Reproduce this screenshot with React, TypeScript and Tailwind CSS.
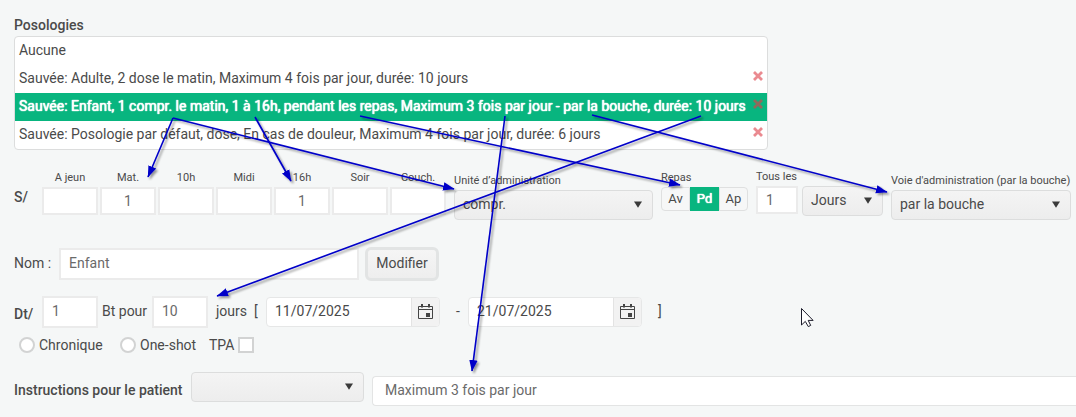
import React, { useId, useState } from "react";

const POSOLOGIES = [
  { text: "Aucune", removable: false },
  { text: "Sauvée: Adulte, 2 dose le matin, Maximum 4 fois par jour, durée: 10 jours", removable: true },
  {
    text: "Sauvée: Enfant, 1 compr. le matin, 1 à 16h, pendant les repas, Maximum 3 fois par jour - par la bouche, durée: 10 jours",
    removable: true,
  },
  {
    text: "Sauvée: Posologie par défaut, dose, En cas de douleur, Maximum 4 fois par jour, durée: 6 jours",
    removable: true,
  },
];

const MOMENTS = [
  { label: "A jeun", value: "" },
  { label: "Mat.", value: "1" },
  { label: "10h", value: "" },
  { label: "Midi", value: "" },
  { label: "16h", value: "1" },
  { label: "Soir", value: "" },
  { label: "Couch.", value: "" },
];

const LINKS = [
  [173, 118, 148, 177],
  [173, 118, 454, 189],
  [255, 117, 291, 181],
  [360, 116, 680, 185],
  [505, 116, 472, 371],
  [592, 115, 887, 192],
  [701, 116, 217, 296],
];

const FIELD =
  "min-w-0 border-2 border-[#ebebeb] bg-white text-sm text-[#6a6a6a] outline-none";
const CAPTION = "block h-5 text-[11px] leading-[22px] whitespace-nowrap";

function Select({ id, label, options, className }: { id: string; label?: string; options: string[]; className: string }) {
  return (
    <div className={`relative h-[30px] ${className}`}>
      <select
        id={id}
        aria-label={label}
        className="h-full w-full appearance-none rounded border border-[#dcdddd] bg-linear-to-b from-[#f4f4f4] to-[#ededed] pr-6 pb-0.5 pl-2 text-sm text-[#4a4a4a] outline-none"
      >
        {options.map((o) => (
          <option key={o}>{o}</option>
        ))}
      </select>
      <svg className="pointer-events-none absolute top-[11px] right-[11px] h-[7px] w-2" viewBox="0 0 8 7" fill="#3a3a3a">
        <path d="M0 0.5h8L4 6.8z" />
      </svg>
    </div>
  );
}

function DateField({ label, value }: { label: string; value: string }) {
  return (
    <div className="flex h-[30px] w-[174px] overflow-hidden rounded border border-[#e6e7e7] bg-white">
      <input
        aria-label={label}
        defaultValue={value}
        className="min-w-0 flex-1 pb-0.5 pl-2 text-sm text-[#4a4a4a] outline-none"
      />
      <button
        type="button"
        aria-label={`Calendrier, ${label}`}
        className="flex w-7 items-center justify-center border-l border-[#e3e3e3] bg-[#f2f2f2]"
      >
        <svg width="15" height="16" viewBox="0 0 15 16" fill="none" stroke="#444">
          <path d="M0.5 2.5h14v12h-14z M0.5 5.5h14" />
          <path d="M4 0v3.5 M11 0v3.5" strokeWidth="2" />
          <path d="M8 9h4v4h-4z" fill="#444" stroke="none" />
        </svg>
      </button>
    </div>
  );
}

function PosologyList() {
  const [selected, setSelected] = useState(2);
  return (
    <ul
      role="listbox"
      aria-label="Posologies"
      className="w-[754px] max-w-full overflow-hidden rounded border border-[#dcdddd] bg-white"
    >
      {POSOLOGIES.map((p, i) => (
        <li
          key={p.text}
          role="option"
          aria-selected={i === selected}
          onClick={() => setSelected(i)}
          className={`flex h-7 items-start justify-between pr-1 pl-1 leading-[26px] whitespace-nowrap ${
            i === selected ? "bg-[#08b57f] text-white [text-shadow:0_0_1px_#fff,0_0_1px_#fff]" : ""
          }`}
        >
          <span>{p.text}</span>
          {p.removable && (
            <button type="button" aria-label="Supprimer" className="pt-1.5">
              <svg width="10" height="10" viewBox="0 0 10 10" className={i === selected ? "stroke-[#8f6a5c]" : "stroke-[#ea8a90]"}>
                <path d="M1 1l8 8M9 1l-8 8" strokeWidth="2.8" />
              </svg>
            </button>
          )}
        </li>
      ))}
    </ul>
  );
}

function Annotations() {
  return (
    <svg className="pointer-events-none absolute top-0 left-0" width="1076" height="417" aria-hidden="true">
      <defs>
        <marker id="head" markerUnits="userSpaceOnUse" markerWidth="12" markerHeight="10" refX="11" refY="5" orient="auto">
          <path d="M0 0.8L11.5 5L0 9.2z" fill="#0000c8" />
        </marker>
        <filter id="shade" filterUnits="userSpaceOnUse" x="0" y="0" width="1076" height="417">
          <feDropShadow dx="2" dy="2" stdDeviation="1.3" floodColor="#000" floodOpacity="0.4" />
        </filter>
      </defs>
      <g filter="url(#shade)" stroke="#0000c8" strokeWidth="1.6">
        {LINKS.map(([x1, y1, x2, y2]) => (
          <line key={`${x1}-${x2}`} x1={x1} y1={y1} x2={x2} y2={y2} markerEnd="url(#head)" />
        ))}
      </g>
      <path
        d="M801.5 308.5v16.5l3.8-3.6 3 5.2 2.4-1.2-2.5-5h4.9z"
        fill="#fff"
        stroke="#1c1c2b"
      />
    </svg>
  );
}

export default function App() {
  const id = useId();
  const [meal, setMeal] = useState("Pd");
  return (
    <main className="relative min-h-screen overflow-hidden bg-[#f5f7f7] pt-[15px] pl-3.5 font-[Roboto,sans-serif] text-sm text-[#4a4a4a]">
      <h1 className="h-[21px] leading-5 font-medium">Posologies</h1>
      <PosologyList />

      <div className="mt-4 flex items-start">
        <span className="w-7 shrink-0 pt-[21px] leading-5 font-medium">S/</span>
        <div className="flex gap-0.5 pt-px">
          {MOMENTS.map((m) => (
            <label key={m.label} className="w-14 text-center">
              <span className={CAPTION}>{m.label}</span>
              <input defaultValue={m.value} className={`${FIELD} block h-7 w-full text-center`} />
            </label>
          ))}
        </div>
        <div className="ml-2 pt-1">
          <label htmlFor={`${id}-unit`} className={CAPTION}>
            Unité d’administration
          </label>
          <Select id={`${id}-unit`} options={["compr.", "dose"]} className="w-[199px]" />
        </div>
        <div className="ml-2 pt-px">
          <span className={CAPTION}>Repas</span>
          <div className="flex">
            {["Av", "Pd", "Ap"].map((v) => (
              <button
                key={v}
                type="button"
                aria-pressed={v === meal}
                onClick={() => setMeal(v)}
                className={`h-6 w-[29px] border text-[13px] leading-5 first:rounded-l-sm last:rounded-r-sm ${
                  v === meal
                    ? "border-[#08b57f] bg-[#08b57f] text-white [text-shadow:0_0_1px_#fff,0_0_1px_#fff]"
                    : "border-[#dfe0e0] bg-[#f6f7f7]"
                }`}
              >
                {v}
              </button>
            ))}
          </div>
        </div>
        <div className="ml-2">
          <label htmlFor={`${id}-every`} className={CAPTION}>
            Tous les
          </label>
          <div className="flex gap-1">
            <input id={`${id}-every`} defaultValue="1" className={`${FIELD} h-7 w-[42px] pl-2`} />
            <Select id={`${id}-period`} label="Période" options={["Jours", "Semaines", "Mois"]} className="w-[81px]" />
          </div>
        </div>
        <div className="ml-2 pt-1">
          <label htmlFor={`${id}-route`} className={CAPTION}>
            Voie d'administration (par la bouche)
          </label>
          <Select id={`${id}-route`} options={["par la bouche"]} className="w-[180px]" />
        </div>
      </div>

      <div className="mt-[27px] flex h-[34px] items-center">
        <label htmlFor={`${id}-name`} className="w-[45px] pb-0.5 whitespace-nowrap">
          Nom :
        </label>
        <input id={`${id}-name`} defaultValue="Enfant" className={`${FIELD} h-8 w-[300px] pb-0.5 pl-2`} />
        <button
          type="button"
          className="ml-1.5 h-[34px] w-[74px] rounded-md border-[3px] border-[#e2e4e4] bg-linear-to-b from-[#f5f5f5] to-[#eeeeee] pb-0.5"
        >
          Modifier
        </button>
      </div>

      <div className="mt-[15px] flex h-8 items-center">
        <label htmlFor={`${id}-dt`} className="w-7 pt-1 font-medium">
          Dt/
        </label>
        <input id={`${id}-dt`} defaultValue="1" className={`${FIELD} h-8 w-14 pb-0.5 pl-2`} />
        <label htmlFor={`${id}-days`} className="ml-1 w-[50px] pb-0.5 whitespace-nowrap">
          Bt pour
        </label>
        <input id={`${id}-days`} defaultValue="10" className={`${FIELD} h-8 w-14 pb-0.5 pl-2`} />
        <span className="w-[46px] pb-0.5 pl-2">jours</span>
        <span className="w-3 pb-0.5">[</span>
        <DateField label="Date de début" value="11/07/2025" />
        <span className="w-7 pb-0.5 pl-4">-</span>
        <DateField label="Date de fin" value="21/07/2025" />
        <span className="pb-0.5 pl-4">]</span>
      </div>

      <div className="mt-2 flex h-[18px] items-center pl-[5px]">
        <label className="flex w-[101px] items-center gap-1">
          <input type="radio" name="mode" className="size-4 appearance-none rounded-full border-2 border-[#d2d3d3] bg-white" />
          Chronique
        </label>
        <label className="flex w-[89px] items-center gap-1">
          <input type="radio" name="mode" className="size-4 appearance-none rounded-full border-2 border-[#d2d3d3] bg-white" />
          One-shot
        </label>
        <label className="flex items-center gap-1">
          TPA
          <input type="checkbox" className="size-4 appearance-none border-2 border-[#d2d3d3] bg-white" />
        </label>
      </div>

      <div className="mt-[18px] flex h-[34px]">
        <label htmlFor={`${id}-instr`} className="w-[177px] shrink-0 pt-2 leading-5 font-medium whitespace-nowrap">
          Instructions pour le patient
        </label>
        <Select id={`${id}-instr`} options={[""]} className="w-[173px] shrink-0" />
        <input
          aria-label="Instructions"
          defaultValue="Maximum 3 fois par jour"
          className="ml-2 h-[30px] min-w-0 flex-1 self-end rounded-l border border-r-0 border-[#e3e4e4] bg-white pb-0.5 pl-3 text-sm text-[#6a6a6a] outline-none"
        />
      </div>

      <Annotations />
    </main>
  );
}
